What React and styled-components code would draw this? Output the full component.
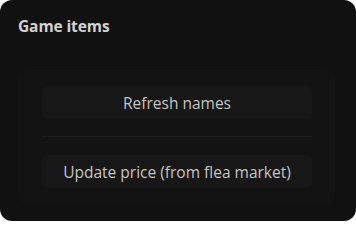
import { createGlobalStyle, styled } from "styled-components"

const GlobalStyle = createGlobalStyle`
  html, body {
    margin: 0;
    padding: 0;
    background: #ffffff;
  }
  body {
    font-family: "Open Sans", "Noto Sans", sans-serif;
  }
`

const Card = styled.section`
  width: 356px;
  height: 221px;
  box-sizing: border-box;
  background-color: #111111;
  border-radius: 12px;
  padding: 14px 21px 19px 18px;
  display: flex;
  flex-direction: column;
  gap: 31px;
`

const Title = styled.h2`
  margin: 0;
  font-size: 15.5px;
  font-weight: 700;
  line-height: 25px;
  color: #d2d2d2;
  letter-spacing: -0.1px;
`

const Panel = styled.div`
  flex: 1;
  background-color: #131313;
  border: 1px solid #151515;
  border-radius: 8px;
  padding: 15px 22px 14px 23px;
  display: flex;
  flex-direction: column;
`

const ActionButton = styled.button`
  display: block;
  width: 100%;
  height: 33px;
  border: none;
  border-radius: 6px;
  background-color: #171717;
  color: #c4c4c4;
  font-family: "Open Sans", "Noto Sans", sans-serif;
  font-size: 15.5px;
  cursor: pointer;
`

const Divider = styled.hr`
  border: none;
  border-top: 1px solid #1c1c1c;
  margin: 17px 0 18px 0;
`

const GameItems = ({ actions }) => (
  <Card>
    <Title>Game items</Title>
    <Panel>
      {actions.map((label, i) => (
        <div key={label}>
          {i > 0 && <Divider />}
          <ActionButton>{label}</ActionButton>
        </div>
      ))}
    </Panel>
  </Card>
)

export default function App() {
  return (
    <>
      <GlobalStyle />
      <GameItems actions={["Refresh names", "Update price (from flea market)"]} />
    </>
  )
}
